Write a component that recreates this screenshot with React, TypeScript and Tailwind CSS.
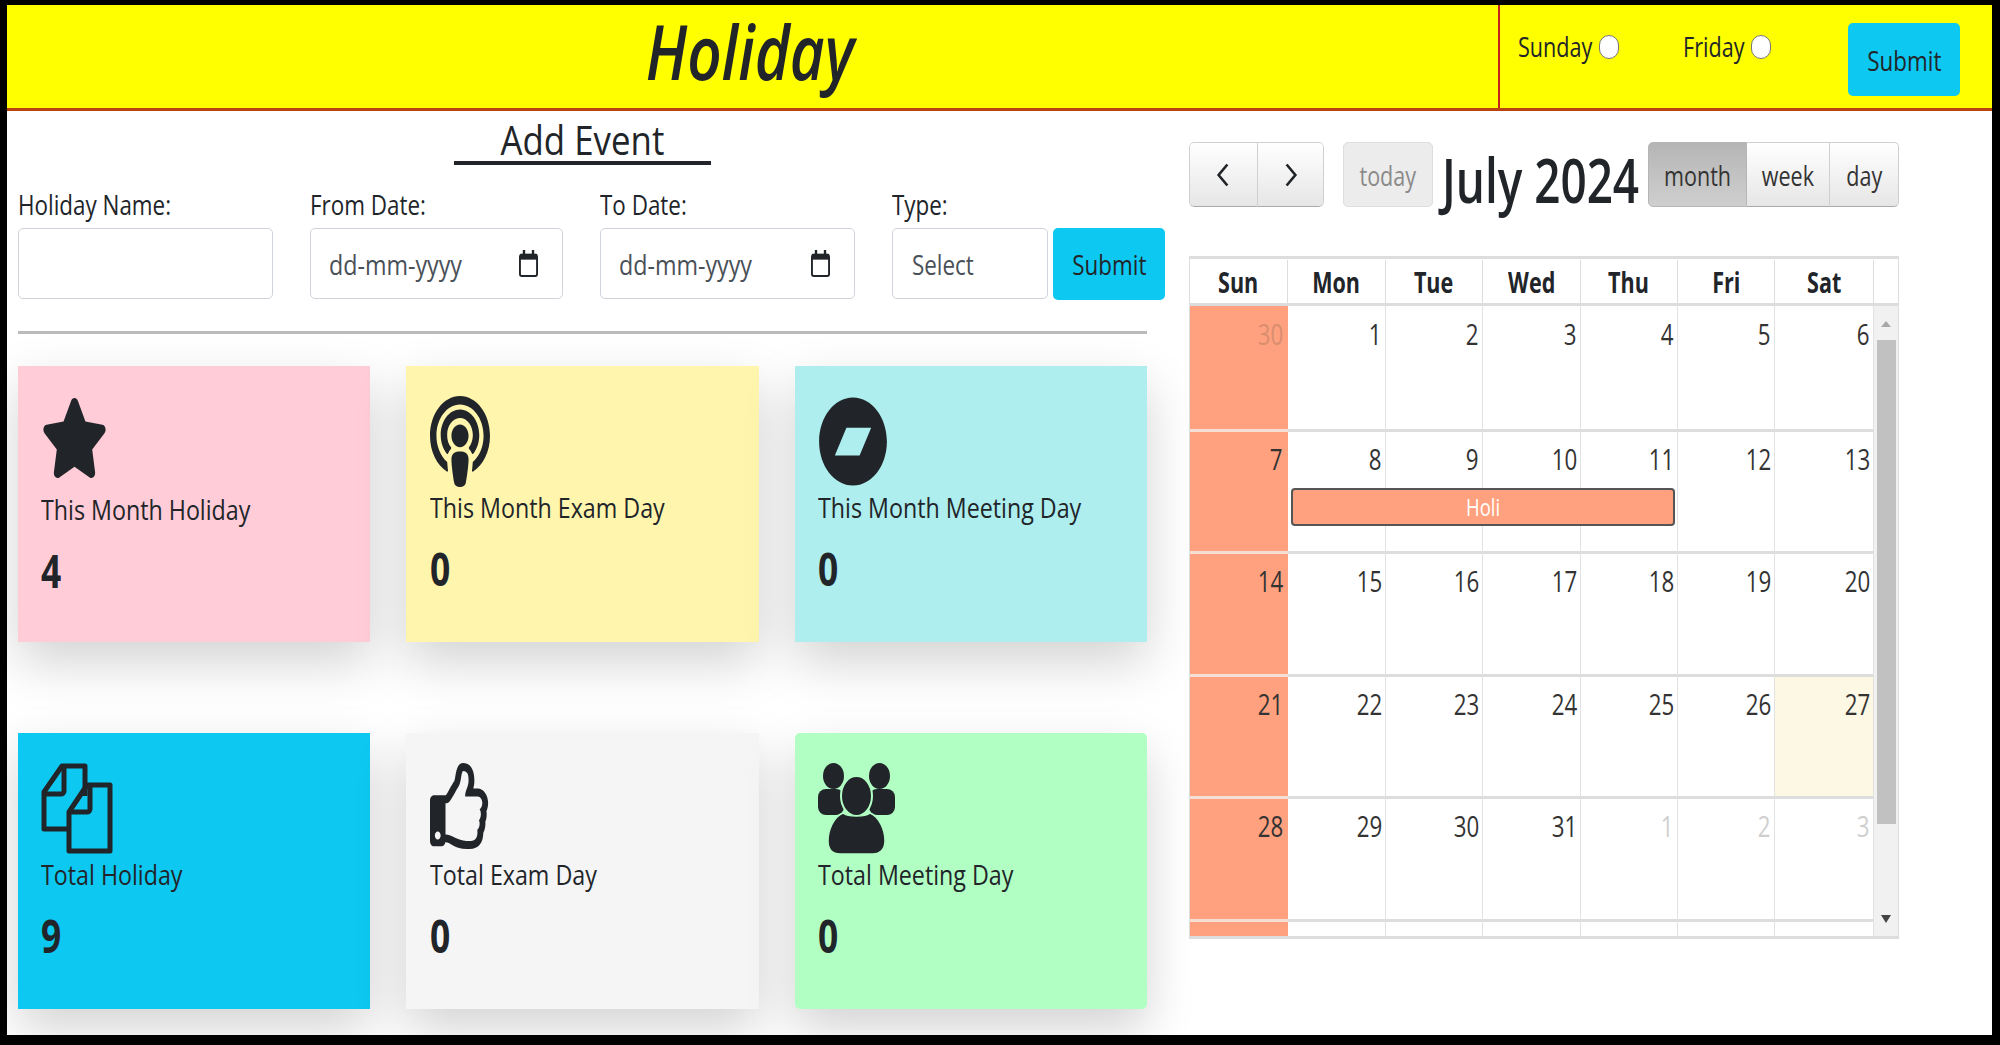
import type { ReactNode } from 'react';
import { FaStar, FaPodcast, FaBandcamp, FaRegThumbsUp } from 'react-icons/fa';

function T({ children, className = 'origin-left', s = 'scale-x-[0.83]' }: { children: ReactNode; className?: string; s?: string }) {
  return <span className={`inline-block whitespace-nowrap ${s} ${className}`}>{children}</span>;
}

const NARROW = 'scale-x-[0.77]';

function CalendarGlyph() {
  return (
    <svg viewBox="0 0 20 28" preserveAspectRatio="none" className="w-[19px] h-[27px] text-[#212529]">
      <rect x="1" y="5" width="18" height="22" rx="2" fill="none" stroke="currentColor" strokeWidth="2" />
      <rect x="1" y="4" width="18" height="6" fill="currentColor" />
      <rect x="4" y="0" width="2.5" height="5" fill="currentColor" />
      <rect x="13.5" y="0" width="2.5" height="5" fill="currentColor" />
    </svg>
  );
}

function DocsIcon() {
  return (
    <svg viewBox="0 0 72 91" preserveAspectRatio="none" className="w-[72px] h-[91px] text-[#212529]" fill="none" stroke="currentColor" strokeWidth="5" strokeLinejoin="round">
      <path d="M26 66H3V29L21 3h23v30" />
      <path d="M3 31h17a3 3 0 0 0 3-3V3" />
      <path d="M30 88h39V22H46L28 49v39z" />
      <path d="M29 49h17a3 3 0 0 0 3-3V23" />
    </svg>
  );
}

function UsersIcon() {
  return (
    <svg viewBox="0 0 77 91" preserveAspectRatio="none" className="w-[77px] h-[91px] text-[#212529]" fill="currentColor">
      <ellipse cx="15.5" cy="13" rx="10.5" ry="13" />
      <ellipse cx="61.5" cy="13" rx="10.5" ry="13" />
      <rect x="0" y="26" width="26" height="26" rx="8" />
      <rect x="51" y="26" width="26" height="26" rx="8" />
      <ellipse cx="38.5" cy="33" rx="15.5" ry="20" stroke="#b2ffc4" strokeWidth="2" />
      <path
        d="M25 50c5 4 22 4 27 0 10 4 15 18 15 28 0 10-7 13-12 13H22c-6 0-12-3-12-13 0-10 5-24 15-28z"
        stroke="#b2ffc4"
        strokeWidth="1.5"
      />
    </svg>
  );
}

const cards: { label: string; value: number; bg: string; icon: ReactNode }[] = [
  { label: 'This Month Holiday', value: 4, bg: 'bg-[#ffccd8] pl-[23px]', icon: <FaStar preserveAspectRatio="none" className="w-[67px] h-[80px] mt-[2px]" /> },
  { label: 'This Month Exam Day', value: 0, bg: 'bg-[#fff5ad] pl-[24px]', icon: <FaPodcast preserveAspectRatio="none" className="w-[60px] h-[91px]" /> },
  { label: 'This Month Meeting Day', value: 0, bg: 'bg-[#aeeeee] pl-[23px]', icon: <FaBandcamp preserveAspectRatio="none" className="w-[70px] h-[91px]" /> },
  { label: 'Total Holiday', value: 9, bg: 'bg-[#0dc8f0] pl-[23px]', icon: <DocsIcon /> },
  { label: 'Total Exam Day', value: 0, bg: 'bg-[#f5f5f5] pl-[24px]', icon: <FaRegThumbsUp preserveAspectRatio="none" className="w-[62px] h-[86px]" /> },
  { label: 'Total Meeting Day', value: 0, bg: 'bg-[#b2ffc4] pl-[23px] rounded-[5px]', icon: <UsersIcon /> },
];

const weekdays = ['Sun', 'Mon', 'Tue', 'Wed', 'Thu', 'Fri', 'Sat'];

const days: { n: number; muted?: boolean }[] = [
  { n: 30, muted: true },
  ...Array.from({ length: 31 }, (_, i) => ({ n: i + 1 })),
  { n: 1, muted: true },
  { n: 2, muted: true },
  { n: 3, muted: true },
];

const fieldClass = 'h-[71px] bg-white border border-[#ced4da] rounded-[5px] flex items-center text-[28px] text-[#495057]';
const btnClass = 'h-full flex items-center justify-center bg-gradient-to-b from-white to-[#e6e6e6] border border-[#d0d0d0] border-b-[#aaaaaa] text-[#333333] text-[28px]';

function Field({ label, className, children }: { label: string; className: string; children?: ReactNode }) {
  return (
    <div className={`shrink-0 ${className}`}>
      <label className="block h-[31px] leading-[16px] text-[27px] text-[#212529]">
        <T>{label}</T>
      </label>
      {children}
    </div>
  );
}

export default function App() {
  return (
    <div className="w-[2000px] h-[1045px] overflow-hidden bg-black pt-[5px] pl-[7px] pr-[8px] pb-[10px] font-['Open_Sans',sans-serif] text-[#212529]">
      <div className="h-full bg-white overflow-hidden flex flex-col">
        {/* Header */}
        <header className="h-[106px] shrink-0 bg-[#ffff00] border-b-[3px] border-[#b9440f] flex">
          <div className="w-[1491px] flex items-center justify-center pr-[6px] pb-[12px]">
            <h1 className="text-[76px] leading-[90px] italic font-semibold text-[#212529]">
              <T className="origin-center px-[10px]" s="scale-x-[0.79]">Holiday</T>
            </h1>
          </div>
          <div className="flex-1 border-l-2 border-[#c8201a] flex relative">
            <div className="w-[165px] ml-[18px] mt-[27px] h-[30px] flex items-center text-[27px]">
              <span className="w-[81px]"><T s="scale-x-[0.8]">Sunday</T></span>
              <input type="radio" className="appearance-none w-[20px] h-[24px] rounded-full bg-white border border-[#777777]" />
            </div>
            <div className="w-[164px] mt-[27px] h-[30px] flex items-center text-[27px]">
              <span className="w-[68px]"><T s="scale-x-[0.8]">Friday</T></span>
              <input type="radio" className="appearance-none w-[20px] h-[24px] rounded-full bg-white border border-[#777777]" />
            </div>
            <button className="absolute left-[348px] top-[18px] w-[112px] h-[73px] rounded-[5px] bg-[#0dc8f0] text-[28px] text-[#212529]">
              <T className="origin-center" s="scale-x-[0.8]">Submit</T>
            </button>
          </div>
        </header>

        <div className="flex-1 flex">
          {/* Left column */}
          <main className="w-[1129px] ml-[11px] shrink-0">
            <div className="w-[257px] h-[54px] mx-auto border-b-4 border-[#212529] flex justify-center items-end">
              <h2 className="text-[41px] leading-[44px] font-medium">
                <T className="origin-center" s="scale-x-[0.85]">Add Event</T>
              </h2>
            </div>

            <div className="flex mt-[32px]">
              <Field label="Holiday Name:" className="w-[255px]">
                <div className={fieldClass} />
              </Field>
              <Field label="From Date:" className="w-[253px] ml-[37px]">
                <div className={`${fieldClass} justify-between pl-[18px] pr-[24px]`}>
                  <T>dd-mm-yyyy</T>
                  <CalendarGlyph />
                </div>
              </Field>
              <Field label="To Date:" className="w-[255px] ml-[37px]">
                <div className={`${fieldClass} justify-between pl-[18px] pr-[24px]`}>
                  <T>dd-mm-yyyy</T>
                  <CalendarGlyph />
                </div>
              </Field>
              <Field label="Type:" className="w-[156px] ml-[37px]">
                <div className={`${fieldClass} pl-[19px]`}>
                  <T s="scale-x-[0.8]">Select</T>
                </div>
              </Field>
              <button className="w-[112px] h-[72px] shrink-0 ml-[5px] mt-[31px] rounded-[5px] bg-[#0dc8f0] text-[28px] text-[#212529]">
                <T className="origin-center" s="scale-x-[0.8]">Submit</T>
              </button>
            </div>

            <div className="h-[3px] bg-[#bbbbbb] mt-[31px]" />

            {/* Stat cards */}
            <div className="grid grid-cols-[352px_353px_352px] gap-x-[36px] gap-y-[91px] mt-[32px]">
              {cards.map((c) => (
                <div key={c.label} className={`h-[276px] pt-[30px] shadow-[0_20px_48px_rgba(0,0,0,0.175)] ${c.bg}`}>
                  <div className="h-[91px] text-[#212529] [&>svg]:block">{c.icon}</div>
                  <div className="h-[40px] mt-[0px] text-[28px] leading-[40px]">
                    <T>{c.label}</T>
                  </div>
                  <div className="mt-[17px] text-[46px] leading-[48px] font-bold">
                    <T s={NARROW}>{c.value}</T>
                  </div>
                </div>
              ))}
            </div>
          </main>

          {/* Calendar */}
          <section className="w-[710px] ml-[42px] shrink-0">
            <div className="flex h-[65px] mt-[31px]">
              <div className="flex w-[136px] rounded-[5px] overflow-hidden">
                <button className={`${btnClass} w-[69px] rounded-l-[5px]`}>
                  <svg viewBox="0 0 16 28" className="w-[14px] h-[26px]" fill="none" stroke="#212529" strokeWidth="3"><path d="M13 2 3 14l10 12" /></svg>
                </button>
                <button className={`${btnClass} w-[67px] border-l-0 rounded-r-[5px]`}>
                  <svg viewBox="0 0 16 28" className="w-[14px] h-[26px]" fill="none" stroke="#212529" strokeWidth="3"><path d="m3 2 10 12L3 26" /></svg>
                </button>
              </div>
              <button className="w-[90px] h-full ml-[19px] rounded-[5px] bg-[#ececec] border border-[#dddddd] text-[28px] text-[#8a8a8a]">
                <T className="origin-center" s={NARROW}>today</T>
              </button>
              <h2 className="w-[208px] ml-[7px] pl-[2px] text-[62px] leading-[74px] font-semibold text-[#212529]">
                <T s="scale-x-[0.74]">July 2024</T>
              </h2>
              <div className="flex">
                <button className="w-[99px] h-full rounded-l-[5px] bg-gradient-to-b from-[#b5b5b5] to-[#cfcfcf] border border-[#b5b5b5] text-[28px] text-[#333333]">
                  <T className="origin-center" s={NARROW}>month</T>
                </button>
                <button className={`${btnClass} w-[83px] border-l-0`}>
                  <T className="origin-center" s={NARROW}>week</T>
                </button>
                <button className={`${btnClass} w-[69px] border-l-0 rounded-r-[5px]`}>
                  <T className="origin-center" s={NARROW}>day</T>
                </button>
              </div>
            </div>

            <div className="mt-[49px] w-[710px] border-[#dddddd] border-t-[3px] border-x border-b-[3px]">
              <div className="grid grid-cols-[98px_98px_97px_98px_97px_97px_99px_25px] h-[47px] border-b-[3px] border-[#dddddd] pt-[1px]">
                {weekdays.map((d) => (
                  <div key={d} className="border-r border-[#dddddd] flex items-center justify-center text-[28px] font-bold">
                    <T className="origin-center" s={NARROW}>{d}</T>
                  </div>
                ))}
                <div />
              </div>

              <div className="flex">
                <div className="w-[684px] grid grid-cols-[98px_98px_97px_98px_97px_97px_99px] grid-rows-[126px_122px_123px_122px_123px_14px]">
                  {days.map((d, i) => (
                    <div
                      key={i}
                      style={{ gridRowStart: Math.floor(i / 7) + 1, gridColumnStart: (i % 7) + 1 }}
                      className={`border-b-[3px] text-right text-[29px] leading-[30px] ${
                        i < 7 ? 'pt-[13px]' : 'pt-[12px]'
                      } ${
                        i % 7 === 0 ? 'pr-[5px] bg-[#ffa07e] border-b-[#f5dfd5]' : 'pr-[3px] border-r border-r-[#e2e2e2] border-b-[#dddddd]'
                      } ${d.n === 27 ? 'bg-[#fcf8e3]' : ''} ${
                        d.muted ? (i === 0 ? 'text-[#d98e70]' : 'text-[#cfcfcf]') : 'text-[#333333]'
                      }`}
                    >
                      <T className="origin-right" s={NARROW}>{d.n}</T>
                    </div>
                  ))}
                  {/* last, cut off week */}
                  <div className="row-start-6 col-start-1 bg-[#ffa07e]" />
                  <div className="row-start-6 col-start-2 border-r border-[#e2e2e2]" />
                  <div className="row-start-6 col-start-3 border-r border-[#e2e2e2]" />
                  <div className="row-start-6 col-start-4 border-r border-[#e2e2e2]" />
                  <div className="row-start-6 col-start-5 border-r border-[#e2e2e2]" />
                  <div className="row-start-6 col-start-6 border-r border-[#e2e2e2]" />
                  <div className="row-start-6 col-start-7 border-r border-[#e2e2e2]" />
                  {/* event bar */}
                  <div className="row-start-2 col-start-2 col-span-4 self-start mt-[56px] mx-[3px] h-[38px] rounded-[4px] bg-[#ffa07e] border-2 border-[#555555] flex items-center justify-center text-[24px] text-white">
                    <T className="origin-center" s={NARROW}>Holi</T>
                  </div>
                </div>

                {/* Scrollbar */}
                <div className="w-[24px] bg-[#f1f1f1] flex flex-col items-center">
                  <svg viewBox="0 0 10 6" className="w-[10px] h-[6px] mt-[15px] fill-[#a8a8a8]"><path d="M5 0l5 6H0z" /></svg>
                  <div className="w-[19px] h-[484px] mt-[13px] bg-[#c1c1c1]" />
                  <svg viewBox="0 0 10 8" className="w-[10px] h-[8px] mt-[91px] fill-[#444444]"><path d="M0 0h10L5 8z" /></svg>
                </div>
              </div>
            </div>
          </section>
        </div>
      </div>
    </div>
  );
}
